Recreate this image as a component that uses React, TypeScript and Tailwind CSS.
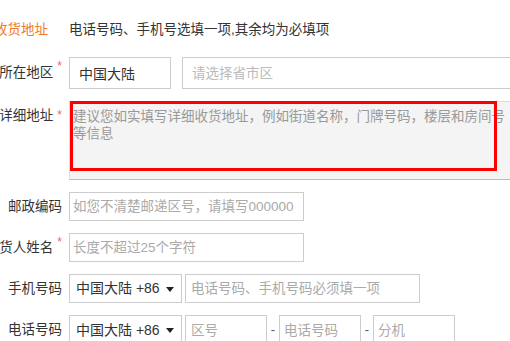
import React from "react";

const font = { fontFamily: '"Liberation Sans", "Noto Sans CJK SC", sans-serif' };

const Star = () => <span className="ml-[4px] mt-[2px] self-start text-[12px] leading-[14px] text-[#e66]">*</span>;

const Label = ({ text, required, top }: { text: string; required?: boolean; top?: boolean }) => (
  <div
    className={`flex w-[62px] shrink-0 justify-end whitespace-nowrap text-[13.5px] text-[#333] ${
      top ? "items-start pt-[5px] leading-[20px]" : "items-center leading-[20px]"
    }`}
  >
    <span>{text}</span>
    {required && <Star />}
  </div>
);

const CountrySelect = () => (
  <div className="flex h-full w-[113px] shrink-0 items-center border border-[#ccc] bg-white pl-[6px] pr-[7px] text-[14px] text-[#333]">
    <span>中国大陆 +86</span>
    <span className="ml-auto mt-[1px] h-0 w-0 border-x-[4px] border-t-[5px] border-x-transparent border-t-[#222]" />
  </div>
);

const inputCls =
  "h-full border border-[#ccc] bg-white text-[13.5px] text-[#333] outline-none placeholder:text-[#aaa]";

export default function App() {
  return (
    <div className="h-[341px] w-[510px] overflow-hidden bg-white" style={font}>
      <div className="flex flex-col pt-[20px]">
        <div className="flex h-[20px] items-center whitespace-nowrap">
          <span className="-ml-[6px] w-[75px] shrink-0 text-[13.5px] text-[#f07a2a]">收货地址</span>
          <span className="text-[13.5px] text-[#333]">电话号码、手机号选填一项,其余均为必填项</span>
        </div>

        {/* 所在地区 */}
        <div className="mt-[17px] flex h-[32px] gap-[7px]">
          <Label text="所在地区" required />
          <input readOnly value="中国大陆" className={`${inputCls} w-[102px] shrink-0 pl-[9px] text-[14px]`} />
          <input
            readOnly
            placeholder="请选择省市区"
            className={`${inputCls} ml-[4px] w-[340px] shrink-0 pl-[9px] placeholder:text-[#bbb]`}
          />
        </div>

        {/* 详细地址 */}
        <div className="mt-[12px] flex h-[79px] gap-[7px]">
          <Label text="详细地址" required top />
          <div className="relative h-full w-[460px] shrink-0">
            <textarea
              readOnly
              placeholder={"建议您如实填写详细收货地址，例如街道名称，门牌号码，楼层和房间号\n等信息"}
              className="block h-full w-full resize-none border border-[#ddd] border-b-[#bbb] bg-[#f4f4f4] pl-[3px] pt-[6px] text-[13.5px] leading-[17px] outline-none placeholder:text-[#999]"
            />
            <div className="pointer-events-none absolute left-[1px] top-0 h-[70px] w-[427px] border-[3px] border-[#ff0000]" />
          </div>
        </div>

        {/* 邮政编码 */}
        <div className="mt-[12px] flex h-[29px] gap-[7px]">
          <Label text="邮政编码" />
          <input
            readOnly
            placeholder="如您不清楚邮递区号，请填写000000"
            className={`${inputCls} w-[235px] shrink-0 pl-[3px]`}
          />
        </div>

        {/* 收货人姓名 */}
        <div className="mt-[12px] flex h-[29px] gap-[7px]">
          <Label text="收货人姓名" required />
          <input readOnly placeholder="长度不超过25个字符" className={`${inputCls} w-[235px] shrink-0 pl-[3px]`} />
        </div>

        {/* 手机号码 */}
        <div className="mt-[12px] flex h-[29px] gap-[7px]">
          <Label text="手机号码" />
          <div className="flex h-full gap-[3px]">
            <CountrySelect />
            <input
              readOnly
              placeholder="电话号码、手机号码必须填一项"
              className={`${inputCls} w-[235px] shrink-0 pl-[5px]`}
            />
          </div>
        </div>

        {/* 电话号码 */}
        <div className="mt-[12px] flex h-[30px] gap-[7px]">
          <Label text="电话号码" />
          <div className="flex h-full items-center gap-[3px]">
            <CountrySelect />
            <input readOnly placeholder="区号" className={`${inputCls} w-[82px] shrink-0 pl-[5px]`} />
            <span className="w-[6px] text-center text-[13px] text-[#555]">-</span>
            <input readOnly placeholder="电话号码" className={`${inputCls} w-[82px] shrink-0 pl-[4px]`} />
            <span className="w-[6px] text-center text-[13px] text-[#555]">-</span>
            <input readOnly placeholder="分机" className={`${inputCls} w-[82px] shrink-0 pl-[4px]`} />
          </div>
        </div>
      </div>
    </div>
  );
}
